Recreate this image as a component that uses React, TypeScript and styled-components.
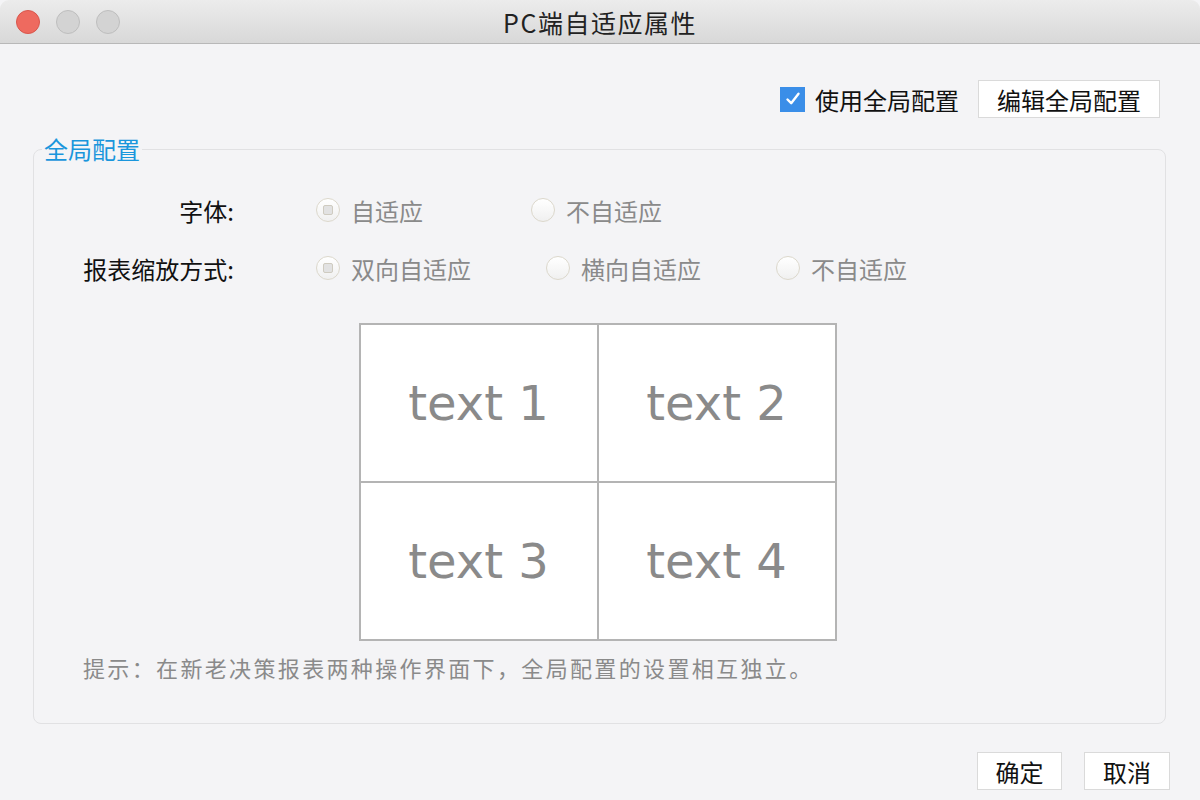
import React from "react";
import styled, { createGlobalStyle } from "styled-components";

const GlobalStyle = createGlobalStyle`
  html, body {
    margin: 0;
    padding: 0;
  }
  body {
    width: 1200px;
    height: 800px;
    overflow: hidden;
    background: #f4f4f6;
    font-family: "Noto Sans CJK SC", "Noto Sans", sans-serif;
  }
`;

const fontRows = [
  { label: "自适应", checked: true },
  { label: "不自适应", checked: false },
];

const scaleRows = [
  { label: "双向自适应", checked: true },
  { label: "横向自适应", checked: false },
  { label: "不自适应", checked: false },
];

const Radio = ({ checked }: { checked: boolean }) => (
  <RadioCircle>{checked && <RadioDot />}</RadioCircle>
);

const App = () => {
  return (
    <Window>
      <GlobalStyle />
      <TitleBar>
        <Lights>
          <Light color="#ee6a5f" edge="#d9564c" />
          <Light color="#d3d3d3" edge="#bebebe" />
          <Light color="#d3d3d3" edge="#bebebe" />
        </Lights>
        <Title>PC端自适应属性</Title>
        <div />
      </TitleBar>

      <Body>
        <TopRow>
          <CheckLabel>
            <CheckBox>
              <svg width="18" height="18" viewBox="0 0 18 18">
                <path
                  d="M3.5 9.5 L7.2 13.2 L14.5 3.8"
                  fill="none"
                  stroke="#fff"
                  strokeWidth="2.4"
                  strokeLinecap="round"
                  strokeLinejoin="round"
                />
              </svg>
            </CheckBox>
            使用全局配置
          </CheckLabel>
          <Button width={182}>编辑全局配置</Button>
        </TopRow>

        <Group>
          <Legend>全局配置</Legend>
          <FormRow>
            <FieldLabel>字体:</FieldLabel>
            <Options>
              {fontRows.map((o) => (
                <Option key={o.label} width={215}>
                  <Radio checked={o.checked} />
                  {o.label}
                </Option>
              ))}
            </Options>
          </FormRow>
          <FormRow>
            <FieldLabel>报表缩放方式:</FieldLabel>
            <Options>
              {scaleRows.map((o) => (
                <Option key={o.label} width={230}>
                  <Radio checked={o.checked} />
                  {o.label}
                </Option>
              ))}
            </Options>
          </FormRow>

          <Preview>
            {["text 1", "text 2", "text 3", "text 4"].map((t) => (
              <Cell key={t}>{t}</Cell>
            ))}
          </Preview>

          <Hint>提示：在新老决策报表两种操作界面下，全局配置的设置相互独立。</Hint>
        </Group>

        <Footer>
          <Button width={85}>确定</Button>
          <Button width={86}>取消</Button>
        </Footer>
      </Body>
    </Window>
  );
};

const Window = styled.div`
  width: 1200px;
  height: 800px;
  display: flex;
  flex-direction: column;
  background: #f4f4f6;
`;

const TitleBar = styled.div`
  height: 43px;
  flex: none;
  display: grid;
  grid-template-columns: 1fr auto 1fr;
  align-items: center;
  background: linear-gradient(#ececec, #d8d8d8);
  border-bottom: 1px solid #b8b8b8;
  border-radius: 9px 9px 0 0;
`;

const Lights = styled.div`
  display: flex;
  gap: 16px;
  padding-left: 16px;
`;

const Light = styled.span<{ color: string; edge: string }>`
  width: 22px;
  height: 22px;
  border-radius: 50%;
  background: ${(p) => p.color};
  border: 1px solid ${(p) => p.edge};
`;

const Title = styled.div`
  font-size: 25px;
  color: #222;
  letter-spacing: 1.5px;
`;

const Body = styled.div`
  flex: 1;
  display: flex;
  flex-direction: column;
  padding: 36px 30px 10px 33px;
  min-height: 0;
`;

const TopRow = styled.div`
  display: flex;
  justify-content: flex-end;
  align-items: center;
  gap: 19px;
  padding-right: 10px;
`;

const CheckLabel = styled.label`
  display: flex;
  align-items: center;
  gap: 10px;
  font-size: 24px;
  color: #111;
`;

const CheckBox = styled.span`
  width: 25px;
  height: 25px;
  background: #3a8ee8;
  display: flex;
  align-items: center;
  justify-content: center;
`;

const Button = styled.button<{ width: number }>`
  width: ${(p) => p.width}px;
  height: 38px;
  padding: 0;
  background: #fff;
  border: 1px solid #dadada;
  font-family: "Noto Sans CJK SC", "Noto Sans", sans-serif;
  font-size: 24px;
  color: #111;
`;

const Group = styled.fieldset`
  flex: 1;
  min-height: 0;
  margin: 14px 4px 0 0;
  padding: 0;
  border: 1px solid #e1e1e3;
  border-radius: 8px;
  display: flex;
  flex-direction: column;
`;

const Legend = styled.legend`
  margin-left: 8px;
  padding: 0 2px;
  font-size: 24px;
  line-height: 34px;
  color: #1a96dc;
`;

const FormRow = styled.div`
  display: flex;
  align-items: center;
  height: 34px;
  margin-top: 24px;

  &:first-of-type {
    margin-top: 27px;
  }
`;

const FieldLabel = styled.div`
  width: 200px;
  text-align: right;
  font-size: 24px;
  color: #111;
`;

const Options = styled.div`
  display: flex;
  margin-left: 82px;
`;

const Option = styled.div<{ width: number }>`
  width: ${(p) => p.width}px;
  display: flex;
  align-items: center;
  gap: 11px;
  font-size: 24px;
  color: #8a8a8a;
`;

const RadioCircle = styled.span`
  width: 22px;
  height: 22px;
  border-radius: 50%;
  border: 1px solid #dcd8cc;
  background: linear-gradient(#ffffff, #f0f0f0);
  display: flex;
  align-items: center;
  justify-content: center;
`;

const RadioDot = styled.span`
  width: 8px;
  height: 8px;
  border-radius: 2px;
  background: #e2e2e2;
  border: 1px solid #cfcbc0;
`;

const Preview = styled.div`
  align-self: center;
  margin-top: 38px;
  display: grid;
  grid-template-columns: 236px 236px;
  grid-template-rows: 156px 156px;
  gap: 2px;
  padding: 2px;
  background: #b4b4b4;
  transform: translateX(-2px);
`;

const Cell = styled.div`
  background: #fff;
  display: flex;
  align-items: center;
  justify-content: center;
  font-family: "DejaVu Sans", Verdana, sans-serif;
  font-size: 48px;
  color: #8a8a8a;
`;

const Hint = styled.div`
  margin-top: 11px;
  padding-left: 49px;
  font-size: 22px;
  line-height: 30px;
  letter-spacing: 2.35px;
  color: #8a8a8a;
`;

const Footer = styled.div`
  display: flex;
  justify-content: flex-end;
  gap: 22px;
  margin-top: 28px;
`;

export default App;
